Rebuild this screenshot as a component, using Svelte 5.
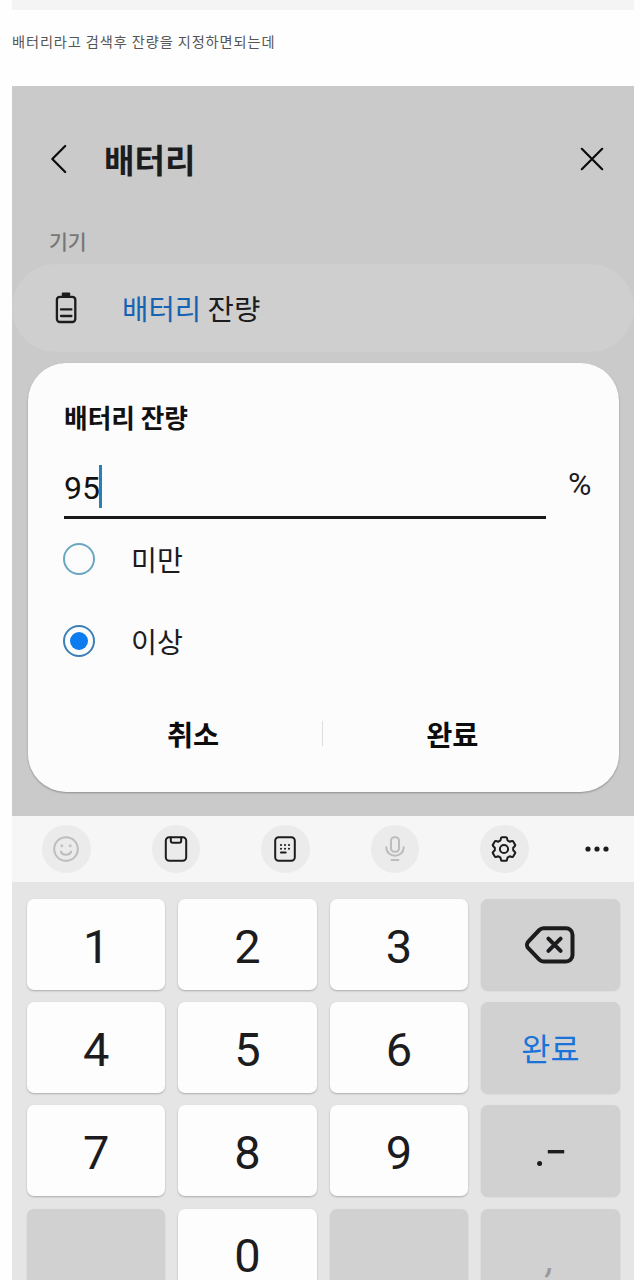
<script>
  const keys = [
    { t: '1' }, { t: '2' }, { t: '3' }, { icon: 'back', fn: true },
    { t: '4' }, { t: '5' }, { t: '6' }, { t: '완료', fn: true, cls: 'done' },
    { t: '7' }, { t: '8' }, { t: '9' }, { icon: 'dotdash', fn: true },
    { t: '', fn: true }, { t: '0' }, { t: '', fn: true }, { t: ',', fn: true, cls: 'comma' }
  ];
  let selected = $state('이상');
  const options = ['미만', '이상'];
</script>

<main class="page">
  <div class="strip"></div>
  <p class="caption">배터리라고 검색후 잔량을 지정하면되는데</p>

  <section class="phone">
    <header class="bar">
      <svg class="chev" width="18" height="30" viewBox="0 0 18 30"><path d="M15.2 2 2.3 15 15.2 28" /></svg>
      <h1>배터리</h1>
      <svg class="close" width="24" height="24" viewBox="0 0 24 24"><path d="M1.8 1.8 22.2 22.2M22.2 1.8 1.8 22.2" /></svg>
    </header>
    <div class="group">기기</div>
    <div class="result">
      <svg width="22" height="32" viewBox="0 0 22 32">
        <rect x="6.8" y="0.5" width="8.4" height="5" rx="1" fill="#1c1c1e" />
        <rect x="1.9" y="4.8" width="18.4" height="25.2" rx="3" fill="none" stroke="#1c1c1e" stroke-width="2.3" />
        <path d="M6 17.4h10.4M6 24h10.4" fill="none" stroke="#1c1c1e" stroke-width="2.3" stroke-linecap="round" />
      </svg>
      <span><em>배터리</em> 잔량</span>
    </div>

    <div class="dialog">
      <h2>배터리 잔량</h2>
      <div class="entry">
        <div class="input"><span>95</span><i></i></div>
        <span class="pct">%</span>
      </div>
      <div class="options">
        {#each options as o}
          <button class="option" onclick={() => (selected = o)}>
            <span class="radio" class:on={selected === o}></span>
            <span class="label">{o}</span>
          </button>
        {/each}
      </div>
      <div class="actions">
        <button>취소</button>
        <div class="sep"></div>
        <button>완료</button>
      </div>
    </div>

    <div class="tools">
      <div class="tool">
        <svg class="dim" width="26" height="26" viewBox="0 0 26 26">
          <circle cx="13" cy="13" r="11.8" />
          <path d="M7.9 15.6c1.4 4.2 8.8 4.2 10.2 0" />
          <circle cx="8.8" cy="9.8" r=".5" /><circle cx="17.2" cy="9.8" r=".5" />
        </svg>
      </div>
      <div class="tool">
        <svg width="26" height="26" viewBox="0 0 26 26">
          <rect x="2.8" y="1.2" width="20.4" height="23.6" rx="3.5" />
          <path d="M7.8 1.5V4.8a2 2 0 0 0 2 2h6.4a2 2 0 0 0 2-2V1.5" />
        </svg>
      </div>
      <div class="tool">
        <svg width="26" height="26" viewBox="0 0 26 26">
          <rect x="3.2" y="1.2" width="19.6" height="23.6" rx="3.5" />
          <path class="dots" d="M9 9h.01M13 9h.01M17 9h.01M9 12.7h.01M13 12.7h.01M17 12.7h.01M9 16.5h4.6" />
        </svg>
      </div>
      <div class="tool">
        <svg class="dim" width="26" height="26" viewBox="0 0 26 26">
          <rect x="9" y="1.2" width="8" height="14.6" rx="3.4" />
          <path d="M4.3 11.2c0 11.4 17.4 11.4 17.4 0M9.6 24h6.8" />
        </svg>
      </div>
      <div class="tool">
        <svg width="26" height="26" viewBox="0 0 26 26">
          <circle cx="13" cy="13" r="4.1" />
          <path d="M11 1.3H15Q15.8 1.3 16 2.1L16.5 4.4 18.6 5.7 21 5Q21.8 4.8 22.2 5.5L24.1 8.8Q24.5 9.5 23.9 10.1L22.2 11.7V14.3L23.9 15.9Q24.5 16.5 24.1 17.2L22.2 20.5Q21.8 21.2 21 21L18.6 20.3 16.5 21.6 16 23.9Q15.8 24.7 15 24.7H11Q10.2 24.7 10 23.9L9.5 21.6 7.4 20.3 5 21Q4.2 21.2 3.8 20.5L1.9 17.2Q1.5 16.5 2.1 15.9L3.8 14.3V11.7L2.1 10.1Q1.5 9.5 1.9 8.8L3.8 5.5Q4.2 4.8 5 5L7.4 5.7 9.5 4.4 10 2.1Q10.2 1.3 11 1.3Z" />
        </svg>
      </div>
      <svg class="more" width="24" height="6" viewBox="0 0 24 6"><circle cx="3" cy="3" r="2.6" /><circle cx="12" cy="3" r="2.6" /><circle cx="21" cy="3" r="2.6" /></svg>
    </div>

    <div class="keys">
      {#each keys as k}
        <div class="key {k.cls ?? ''}" class:fn={k.fn}>
          {#if k.icon === 'back'}
            <svg width="50" height="38" viewBox="0 0 50 38">
              <path d="M18.5 2.2H41a6.5 6.5 0 0 1 6.5 6.5V29a6.5 6.5 0 0 1-6.5 6.5H18.5a6 6 0 0 1-4.2-1.8L3.3 22.2a4.8 4.8 0 0 1 0-6.6L14.3 4a6 6 0 0 1 4.2-1.8Z" />
              <path d="M23.4 12.6 35.6 24.8M35.6 12.6 23.4 24.8" />
            </svg>
          {:else if k.icon === 'dotdash'}
            <svg class="dd" width="28" height="18" viewBox="0 0 28 18"><circle cx="2.6" cy="14.6" r="2.5" /><rect x="10.8" y="1" width="16.4" height="3.4" /></svg>
          {:else}
            {k.t}
          {/if}
        </div>
      {/each}
    </div>
  </section>
</main>

<style>
  :global(body) { background: #fefefe; overflow: hidden; }
  .page {
    width: 640px; height: 1280px; box-sizing: border-box; padding: 0 6px 0 12px;
    overflow: hidden; display: flex; flex-direction: column;
    font-family: 'Noto Sans CJK KR', sans-serif; color: #1c1c1e;
  }
  .strip { height: 10px; flex: none; background: #f4f4f4; }
  .caption {
    margin: 0; height: 76px; flex: none; box-sizing: border-box; padding-top: 19px;
    font-size: 14.2px; letter-spacing: .9px; line-height: 24px; color: #555; white-space: nowrap;
  }
  .phone { height: 1194px; flex: none; background: #cacaca; display: flex; flex-direction: column; overflow: hidden; }
  .phone > * { flex: none; }
  .bar { height: 145px; box-sizing: border-box; padding: 0 30px 0 38px; display: flex; align-items: center; }
  .bar svg { fill: none; stroke: #0c0c0c; stroke-width: 2.2; stroke-linecap: round; stroke-linejoin: round; }
  h1 { margin: 0 auto 0 36px; font-size: 33.2px; line-height: 50px; font-weight: 700; }
  .group { height: 33px; line-height: 21px; padding-left: 37px; font-size: 20.5px; font-weight: 500; color: #777; }
  .result {
    height: 88px; border-radius: 44px; background: #cfcfcf; box-sizing: border-box; padding-left: 43px;
    display: flex; align-items: center; gap: 45px; font-size: 28.7px; line-height: 40px;
  }
  .result em { font-style: normal; color: #1763b3; }
  .dialog {
    margin: 11px 15.5px 24px 16px; height: 429px; box-sizing: border-box; border-radius: 38px;
    background: #fcfcfc; box-shadow: 0 1px 2px rgba(0, 0, 0, .3); padding: 35px 27px 0 36px;
    display: flex; flex-direction: column;
  }
  h2 { margin: 0; font-size: 25.7px; line-height: 38px; font-weight: 700; color: #111; }
  .entry { display: flex; height: 82px; font-family: Roboto, sans-serif; font-size: 32px; justify-content: space-between; }
  .input {
    width: 482px; height: 55px; margin-top: 28px; box-sizing: border-box; border-bottom: 3px solid #191919;
    display: flex; line-height: 49px; color: #111;
  }
  .input i { width: 3px; height: 43px; background: #2b7fb9; margin-top: 1px; margin-left: -1px; }
  .pct { line-height: 40px; margin-top: 28px; }
  .options { display: flex; flex-direction: column; }
  button { border: 0; background: none; padding: 0; font: inherit; color: inherit; }
  .option { height: 82px; display: flex; align-items: center; gap: 36px; margin-left: -1px; font-size: 28.2px; line-height: 40px; }
  .radio {
    width: 32px; height: 32px; box-sizing: border-box; border: 2px solid #6aa6c2; border-radius: 50%;
    display: flex; align-items: center; justify-content: center;
  }
  .radio.on { border-color: #3c7fb8; }
  .radio.on::after { content: ''; width: 18px; height: 18px; border-radius: 50%; background: #0d7cf0; }
  .actions { display: grid; grid-template-columns: 1fr 1px 1fr; align-items: center; height: 40px; margin: 31px 10px 0 0; font-size: 28.4px; font-weight: 700; color: #0c0c0c; }
  .sep { height: 25px; background: #ddd; }
  .tools {
    height: 66px; background: #f6f6f6; box-sizing: border-box; padding: 0 25px 0 30px;
    display: flex; align-items: center; gap: 61px;
  }
  .tool { width: 48.5px; height: 48px; border-radius: 50%; background: #ebebeb; display: grid; place-items: center; flex: none; }
  .tool svg { fill: none; stroke: #1c1c1e; stroke-width: 2; stroke-linecap: round; stroke-linejoin: round; }
  .tool svg.dim { stroke: #bdbdbd; }
  .tool .dots { stroke-width: 2.1; }
  .more { flex: none; margin-left: -5px; fill: #1c1c1e; }
  .keys {
    height: 398px; background: #e5e5e5; box-sizing: border-box; padding: 17px 14.5px 0 15px;
    display: grid; grid-template-columns: repeat(4, 1fr); grid-auto-rows: 91px; gap: 12.2px 13.2px;
  }
  .key {
    border-radius: 7px; background: #fdfdfd; box-shadow: 0 1px 2px rgba(0, 0, 0, .25);
    display: flex; align-items: center; justify-content: center;
    font-family: Roboto, 'Noto Sans CJK KR', sans-serif; font-size: 47px; line-height: 60px; padding-top: 4px; box-sizing: border-box;
  }
  .key.fn { background: #d1d1d1; box-shadow: 0 1px 2px rgba(0, 0, 0, .12); }
  .key svg { fill: none; stroke: #1c1c1e; stroke-width: 4; stroke-linecap: round; stroke-linejoin: round; margin-top: -3px; }
  .key svg.dd { fill: #1c1c1e; stroke: none; margin: 11px 0 0 1px; }
  .key.done { font-family: 'Noto Sans CJK KR', sans-serif; font-size: 31.6px; color: #1a73d9; padding: 0 0 1px; }
  .key.comma { color: #999; font-size: 38px; font-style: italic; padding-top: 10px; }
</style>
